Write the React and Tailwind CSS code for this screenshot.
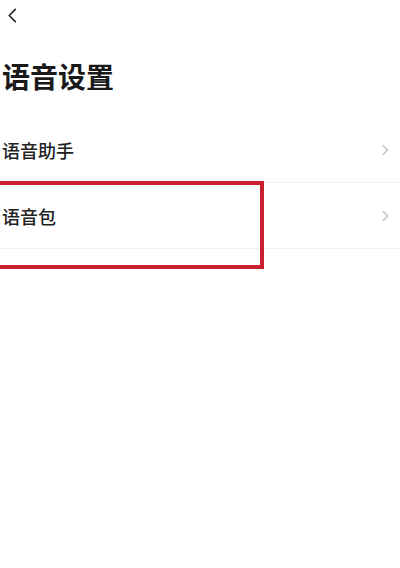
import React from "react";

const items = [{ id: "assistant", label: "语音助手" }, { id: "pack", label: "语音包" }];

const Chevron = ({ dir = "right", className = "" }) => (
  <svg viewBox="0 0 10 16" className={className} fill="none" stroke="currentColor" strokeWidth="1.7" strokeLinecap="round" strokeLinejoin="round">
    {dir === "left" ? <path d="M8.5 1.5 2 8l6.5 6.5" /> : <path d="M1.5 1.5 8 8l-6.5 6.5" />}
  </svg>
);

export default function App() {
  return (
    <div className="relative w-[400px] h-[568px] overflow-hidden bg-white font-['Noto_Sans_CJK_SC','Noto_Sans',sans-serif] text-[#1a1a1a]">
      {/* top bar */}
      <div className="h-[30px] pt-[8px] pl-[7px]">
        <Chevron dir="left" className="w-[10px] h-[15px] text-[#222]" />
      </div>

      <h1 className="mt-[28px] pl-[2px] text-[28px] leading-[36px] font-bold">语音设置</h1>

      <div className="mt-[23px]">
        {items.map((item) => (
          <div key={item.id} className="h-[66px] flex items-center justify-between pl-[2px] pr-[11px] border-b border-[#f0f0f0]">
            <span className="text-[18px] leading-none font-medium text-[#222]">{item.label}</span>
            <Chevron className="w-[7px] h-[12px] text-[#b8b8b8]" />
          </div>
        ))}
      </div>

      {/* red highlight annotation */}
      <div className="absolute left-[-6px] top-[181px] w-[270px] h-[88px] border-[4px] border-[#c8202f] pointer-events-none" />
    </div>
  );
}
